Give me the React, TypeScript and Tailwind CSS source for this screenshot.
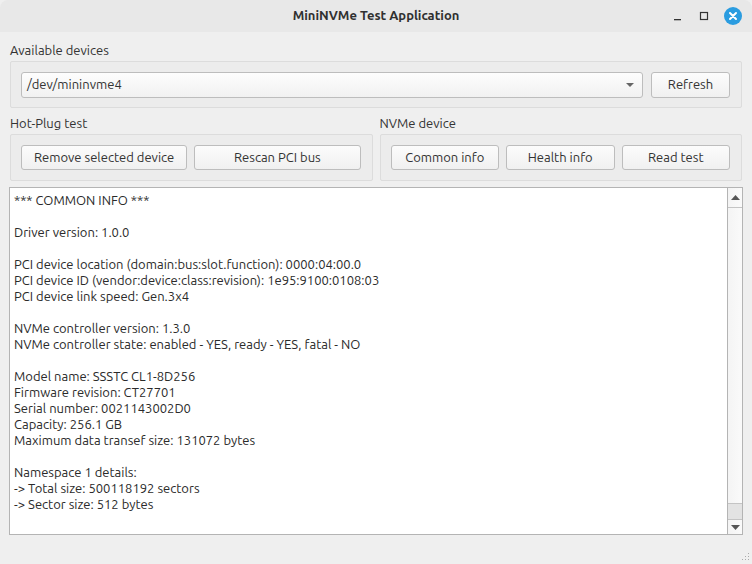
import React from "react";

const FONT = "font-['Ubuntu','Noto_Sans','Open_Sans',sans-serif]";

const lines = [
  "*** COMMON INFO ***",
  "",
  "Driver version: 1.0.0",
  "",
  "PCI device location (domain:bus:slot.function): 0000:04:00.0",
  "PCI device ID (vendor:device:class:revision): 1e95:9100:0108:03",
  "PCI device link speed: Gen.3x4",
  "",
  "NVMe controller version: 1.3.0",
  "NVMe controller state: enabled - YES, ready - YES, fatal - NO",
  "",
  "Model name: SSSTC CL1-8D256",
  "Firmware revision: CT27701",
  "Serial number: 0021143002D0",
  "Capacity: 256.1 GB",
  "Maximum data transef size: 131072 bytes",
  "",
  "Namespace 1 details:",
  "-> Total size: 500118192 sectors",
  "-> Sector size: 512 bytes",
];

const Btn = ({ label, className = "" }: { label: string; className?: string }) => (
  <button
    className={`h-[25px] rounded-[3px] border border-[#bdbdbd] bg-gradient-to-b from-[#fcfcfc] to-[#f0f0f0] text-[13px] text-[#333] flex items-center justify-center ${className}`}
  >
    {label}
  </button>
);

const Group = ({ children, className = "" }: { children: React.ReactNode; className?: string }) => (
  <div className={`h-[47px] rounded-[2px] border border-[#dcdcdc] bg-[#ececec] flex items-center gap-[7px] pl-[10px] pr-[11px] ${className}`}>
    {children}
  </div>
);

export default function App() {
  return (
    <div className={`w-[752px] h-[564px] bg-[#efefef] flex flex-col text-[#333] ${FONT}`}>
      {/* title bar */}
      <div className="h-[32px] bg-[#e8e8e8] rounded-t-[8px] relative flex items-center justify-center shrink-0">
        <span className="text-[13px] font-semibold text-[#303030]">MiniNVMe Test Application</span>
        <div className="absolute right-[10px] top-0 h-full flex items-center gap-[14px]">
          <svg width="12" height="12" viewBox="0 0 12 12">
            <rect x="2" y="9" width="7" height="1.3" fill="#333" />
          </svg>
          <svg width="12" height="12" viewBox="0 0 12 12">
            <rect x="2.5" y="2.5" width="7" height="7" fill="none" stroke="#333" strokeWidth="1.2" />
          </svg>
          <svg width="18" height="18" viewBox="0 0 18 18">
            <circle cx="9" cy="9" r="9" fill="#2a9ce0" />
            <path d="M6 6 L12 12 M12 6 L6 12" stroke="#fff" strokeWidth="2" strokeLinecap="round" />
          </svg>
        </div>
      </div>

      <div className="flex-1 flex flex-col px-[10px]">
        <div className="mt-[10px] h-[16px] leading-[16px] text-[13px]">Available devices</div>
        <Group className="mt-[3px] !gap-[8px]">
          <div className="flex-1 h-[26px] rounded-[3px] border border-[#bdbdbd] bg-gradient-to-b from-[#fdfdfd] to-[#f1f1f1] flex items-center pl-[5px] pr-[7px] text-[13px]">
            <span className="flex-1">/dev/mininvme4</span>
            <svg width="10" height="6" viewBox="0 0 10 6">
              <path d="M1 1 L9 1 L5 5 Z" fill="#666" />
            </svg>
          </div>
          <Btn label="Refresh" className="w-[79px] !h-[26px]" />
        </Group>

        <div className="mt-[7px] flex gap-[7px]">
          <div className="flex-1 flex flex-col">
            <div className="h-[16px] leading-[16px] text-[13px]">Hot-Plug test</div>
            <Group className="mt-[3px]">
              <Btn label="Remove selected device" className="flex-1" />
              <Btn label="Rescan PCI bus" className="flex-1" />
            </Group>
          </div>
          <div className="flex-1 flex flex-col">
            <div className="h-[16px] leading-[16px] text-[13px]">NVMe device</div>
            <Group className="mt-[3px]">
              <Btn label="Common info" className="flex-1" />
              <Btn label="Health info" className="flex-1" />
              <Btn label="Read test" className="flex-1" />
            </Group>
          </div>
        </div>

        {/* output */}
        <div className="mt-[6px] -mx-[1px] h-[348px] border border-[#b4b4b4] bg-white flex">
          <div className="flex-1 pl-[4px] pt-[4px] text-[13px] leading-[16px] text-[#2a2a2a] overflow-hidden">
            {lines.map((l, i) => (
              <div key={i} className="h-[16px] whitespace-pre">
                {l}
              </div>
            ))}
          </div>
          <div className="w-[15px] border-l border-[#b4b4b4] flex flex-col bg-gradient-to-r from-[#f4f4f4] to-[#fafafa]">
            <div className="h-[20px] border-b border-[#c4c4c4] flex items-center justify-center">
              <svg width="9" height="5" viewBox="0 0 9 5">
                <path d="M0 5 L4.5 0 L9 5 Z" fill="#555" />
              </svg>
            </div>
            <div className="flex-1" />
            <div className="h-[16px] border-t border-[#c4c4c4] bg-[#e3e3e3]" />
            <div className="h-[15px] border-t border-[#c4c4c4] flex items-center justify-center">
              <svg width="9" height="5" viewBox="0 0 9 5">
                <path d="M0 0 L9 0 L4.5 5 Z" fill="#555" />
              </svg>
            </div>
          </div>
        </div>

        <div className="flex-1 flex items-end justify-end -mr-[8px] pb-[2px]">
          <svg width="10" height="10" viewBox="0 0 10 10">
            {[
              [8, 1],
              [5, 4],
              [8, 4],
              [2, 7],
              [5, 7],
              [8, 7],
            ].map(([x, y], i) => (
              <rect key={i} x={x} y={y} width="1" height="1" fill="#aaa" />
            ))}
          </svg>
        </div>
      </div>
    </div>
  );
}
